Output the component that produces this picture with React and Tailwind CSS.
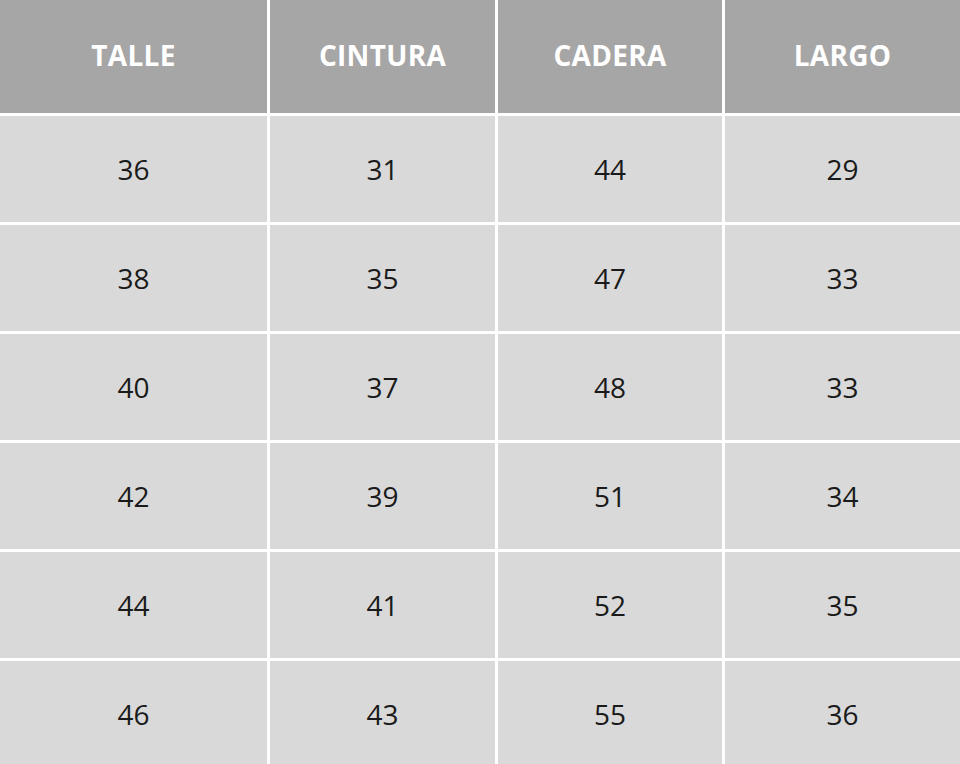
const headers = ["TALLE", "CINTURA", "CADERA", "LARGO"];

const rows = [
  [36, 31, 44, 29],
  [38, 35, 47, 33],
  [40, 37, 48, 33],
  [42, 39, 51, 34],
  [44, 41, 52, 35],
  [46, 43, 55, 36],
];

export default function App() {
  return (
    <div className="w-[960px] h-[764px] overflow-hidden bg-white" style={{ fontFamily: '"Open Sans", sans-serif' }}>
      <div className="grid grid-cols-[267px_225px_224px_1fr] grid-rows-[113px_repeat(6,106px)] gap-[3px]">
        {headers.map((h) => (
          <div
            key={h}
            className="bg-[#a6a6a6] flex items-center justify-center pb-1 text-white font-bold text-[28px] tracking-[0.3px]"
          >
            {h}
          </div>
        ))}
        {rows.map((row, i) =>
          row.map((v, j) => (
            <div
              key={i + "-" + j}
              className="bg-[#d9d9d9] flex items-center justify-center text-[#1a1a1a] text-[28px]"
            >
              {v}
            </div>
          ))
        )}
      </div>
    </div>
  );
}
